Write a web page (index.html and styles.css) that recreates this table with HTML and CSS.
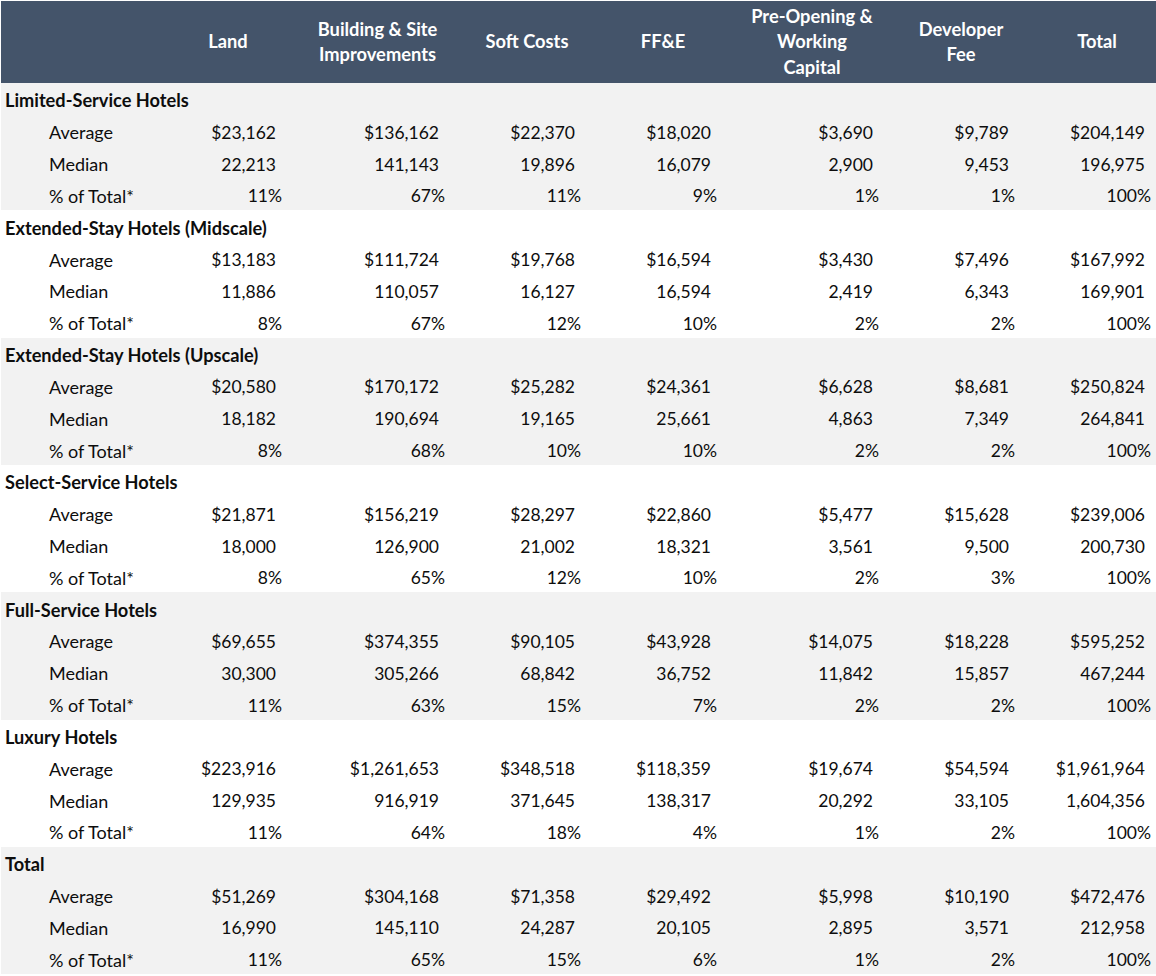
FILE: index.html
```html
<!DOCTYPE html>
<html lang="en">
<head>
<meta charset="utf-8">
<title>Hotel Development Costs</title>
<link rel="stylesheet" href="styles.css">
</head>
<body>
<div class="sheet">
  <div class="row head">
    <div class="cell"></div>
    <div class="cell">Land</div>
    <div class="cell">Building &amp; Site<br>Improvements</div>
    <div class="cell">Soft Costs</div>
    <div class="cell">FF&amp;E</div>
    <div class="cell">Pre-Opening &amp;<br>Working<br>Capital</div>
    <div class="cell">Developer<br>Fee</div>
    <div class="cell">Total</div>
  </div>

  <div class="group alt">
    <div class="row title"><div class="cell">Limited-Service Hotels</div></div>
    <div class="row"><div class="cell lab">Average</div><div class="cell">$23,162</div><div class="cell">$136,162</div><div class="cell">$22,370</div><div class="cell">$18,020</div><div class="cell">$3,690</div><div class="cell">$9,789</div><div class="cell">$204,149</div></div>
    <div class="row"><div class="cell lab">Median</div><div class="cell">22,213</div><div class="cell">141,143</div><div class="cell">19,896</div><div class="cell">16,079</div><div class="cell">2,900</div><div class="cell">9,453</div><div class="cell">196,975</div></div>
    <div class="row pct"><div class="cell lab">% of Total*</div><div class="cell">11%</div><div class="cell">67%</div><div class="cell">11%</div><div class="cell">9%</div><div class="cell">1%</div><div class="cell">1%</div><div class="cell">100%</div></div>
  </div>

  <div class="group">
    <div class="row title"><div class="cell">Extended-Stay Hotels (Midscale)</div></div>
    <div class="row"><div class="cell lab">Average</div><div class="cell">$13,183</div><div class="cell">$111,724</div><div class="cell">$19,768</div><div class="cell">$16,594</div><div class="cell">$3,430</div><div class="cell">$7,496</div><div class="cell">$167,992</div></div>
    <div class="row"><div class="cell lab">Median</div><div class="cell">11,886</div><div class="cell">110,057</div><div class="cell">16,127</div><div class="cell">16,594</div><div class="cell">2,419</div><div class="cell">6,343</div><div class="cell">169,901</div></div>
    <div class="row pct"><div class="cell lab">% of Total*</div><div class="cell">8%</div><div class="cell">67%</div><div class="cell">12%</div><div class="cell">10%</div><div class="cell">2%</div><div class="cell">2%</div><div class="cell">100%</div></div>
  </div>

  <div class="group alt">
    <div class="row title"><div class="cell">Extended-Stay Hotels (Upscale)</div></div>
    <div class="row"><div class="cell lab">Average</div><div class="cell">$20,580</div><div class="cell">$170,172</div><div class="cell">$25,282</div><div class="cell">$24,361</div><div class="cell">$6,628</div><div class="cell">$8,681</div><div class="cell">$250,824</div></div>
    <div class="row"><div class="cell lab">Median</div><div class="cell">18,182</div><div class="cell">190,694</div><div class="cell">19,165</div><div class="cell">25,661</div><div class="cell">4,863</div><div class="cell">7,349</div><div class="cell">264,841</div></div>
    <div class="row pct"><div class="cell lab">% of Total*</div><div class="cell">8%</div><div class="cell">68%</div><div class="cell">10%</div><div class="cell">10%</div><div class="cell">2%</div><div class="cell">2%</div><div class="cell">100%</div></div>
  </div>

  <div class="group">
    <div class="row title"><div class="cell">Select-Service Hotels</div></div>
    <div class="row"><div class="cell lab">Average</div><div class="cell">$21,871</div><div class="cell">$156,219</div><div class="cell">$28,297</div><div class="cell">$22,860</div><div class="cell">$5,477</div><div class="cell">$15,628</div><div class="cell">$239,006</div></div>
    <div class="row"><div class="cell lab">Median</div><div class="cell">18,000</div><div class="cell">126,900</div><div class="cell">21,002</div><div class="cell">18,321</div><div class="cell">3,561</div><div class="cell">9,500</div><div class="cell">200,730</div></div>
    <div class="row pct"><div class="cell lab">% of Total*</div><div class="cell">8%</div><div class="cell">65%</div><div class="cell">12%</div><div class="cell">10%</div><div class="cell">2%</div><div class="cell">3%</div><div class="cell">100%</div></div>
  </div>

  <div class="group alt">
    <div class="row title"><div class="cell">Full-Service Hotels</div></div>
    <div class="row"><div class="cell lab">Average</div><div class="cell">$69,655</div><div class="cell">$374,355</div><div class="cell">$90,105</div><div class="cell">$43,928</div><div class="cell">$14,075</div><div class="cell">$18,228</div><div class="cell">$595,252</div></div>
    <div class="row"><div class="cell lab">Median</div><div class="cell">30,300</div><div class="cell">305,266</div><div class="cell">68,842</div><div class="cell">36,752</div><div class="cell">11,842</div><div class="cell">15,857</div><div class="cell">467,244</div></div>
    <div class="row pct"><div class="cell lab">% of Total*</div><div class="cell">11%</div><div class="cell">63%</div><div class="cell">15%</div><div class="cell">7%</div><div class="cell">2%</div><div class="cell">2%</div><div class="cell">100%</div></div>
  </div>

  <div class="group">
    <div class="row title"><div class="cell">Luxury Hotels</div></div>
    <div class="row"><div class="cell lab">Average</div><div class="cell">$223,916</div><div class="cell">$1,261,653</div><div class="cell">$348,518</div><div class="cell">$118,359</div><div class="cell">$19,674</div><div class="cell">$54,594</div><div class="cell">$1,961,964</div></div>
    <div class="row"><div class="cell lab">Median</div><div class="cell">129,935</div><div class="cell">916,919</div><div class="cell">371,645</div><div class="cell">138,317</div><div class="cell">20,292</div><div class="cell">33,105</div><div class="cell">1,604,356</div></div>
    <div class="row pct"><div class="cell lab">% of Total*</div><div class="cell">11%</div><div class="cell">64%</div><div class="cell">18%</div><div class="cell">4%</div><div class="cell">1%</div><div class="cell">2%</div><div class="cell">100%</div></div>
  </div>

  <div class="group alt">
    <div class="row title"><div class="cell">Total</div></div>
    <div class="row"><div class="cell lab">Average</div><div class="cell">$51,269</div><div class="cell">$304,168</div><div class="cell">$71,358</div><div class="cell">$29,492</div><div class="cell">$5,998</div><div class="cell">$10,190</div><div class="cell">$472,476</div></div>
    <div class="row"><div class="cell lab">Median</div><div class="cell">16,990</div><div class="cell">145,110</div><div class="cell">24,287</div><div class="cell">20,105</div><div class="cell">2,895</div><div class="cell">3,571</div><div class="cell">212,958</div></div>
    <div class="row pct"><div class="cell lab">% of Total*</div><div class="cell">11%</div><div class="cell">65%</div><div class="cell">15%</div><div class="cell">6%</div><div class="cell">1%</div><div class="cell">2%</div><div class="cell">100%</div></div>
  </div>
</div>
</body>
</html>
```

FILE: styles.css
```css
html, body {
  margin: 0;
  padding: 0;
  background: #ffffff;
}

body {
  font-family: "Lato", "Liberation Sans", sans-serif;
  font-size: 17.5px;
  color: #0d0d0d;
  overflow: hidden;
}

.sheet {
  width: 1155px;
  margin: 1px 0 0 1px;
  overflow: hidden;
}

.row {
  display: grid;
  grid-template-columns: 159px 136px 163px 136px 136px 162px 136px 136px;
  height: 31.83px;
  align-items: center;
}

.row .cell {
  text-align: right;
  padding-right: 20px;
  padding-top: 3px;
  white-space: nowrap;
}

.row .cell.lab {
  text-align: left;
  padding-left: 48px;
  padding-right: 0;
  font-size: 18px;
}

.row.pct .cell {
  padding-right: 14px;
}

.row.pct .cell.lab {
  padding-right: 0;
}

.row.title {
  display: flex;
}

.row.title .cell {
  text-align: left;
  font-weight: 700;
  font-size: 18.2px;
  padding-left: 4px;
}

.row.head {
  height: 82px;
  background: #44546a;
  color: #ffffff;
  font-weight: 700;
  font-size: 18.3px;
  line-height: 25.5px;
}

.row.head .cell {
  text-align: center;
  padding: 0;
}

.group {
  background: #ffffff;
}

.group.alt {
  background: #f2f2f2;
}
```
